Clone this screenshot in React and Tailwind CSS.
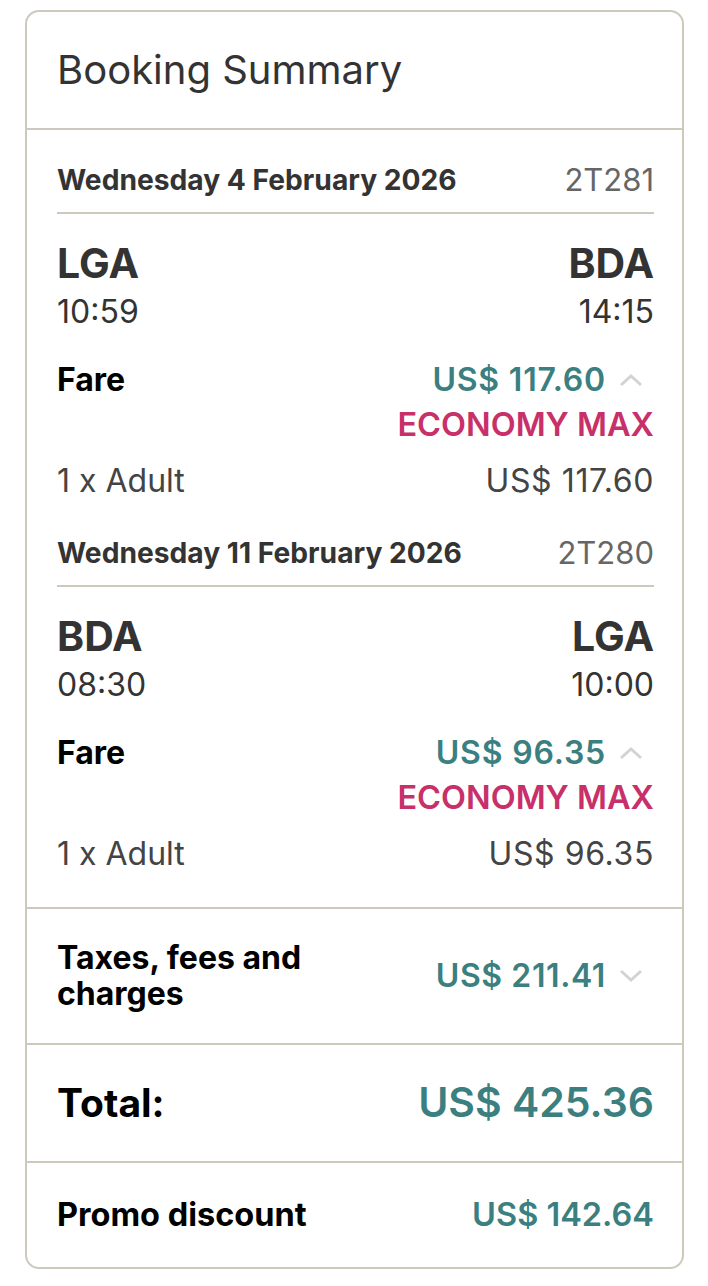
const FONT = { fontFamily: "Inter, 'Liberation Sans', sans-serif" };

const legs = [
  {
    date: "Wednesday 4 February 2026",
    flight: "2T281",
    from: "LGA",
    to: "BDA",
    dep: "10:59",
    arr: "14:15",
    fare: "US$ 117.60",
  },
  {
    date: "Wednesday 11 February 2026",
    flight: "2T280",
    from: "BDA",
    to: "LGA",
    dep: "08:30",
    arr: "10:00",
    fare: "US$ 96.35",
  },
];

function Chevron({ up }) {
  return (
    <svg width="24" height="14" viewBox="0 0 24 14" className="shrink-0">
      <path
        d={up ? "M2 12 L12 3 L22 12" : "M2 2 L12 11 L22 2"}
        fill="none"
        stroke="#d3d3d3"
        strokeWidth="3"
      />
    </svg>
  );
}

function Leg({ leg }) {
  return (
    <div>
      <div className="flex items-center justify-between border-b-2 border-[#cdc9bd] pb-[16px]">
        <span className="text-[28.2px] font-bold text-[#333] leading-[32px]">{leg.date}</span>
        <span className="text-[31px] text-[#666] leading-[32px]">{leg.flight}</span>
      </div>
      <div className="flex justify-between mt-[27px]">
        <div>
          <div className="text-[41px] font-bold text-[#333] leading-[44px]">{leg.from}</div>
          <div className="text-[32px] text-[#333] leading-[38px] mt-[8px]">{leg.dep}</div>
        </div>
        <div className="text-right">
          <div className="text-[41px] font-bold text-[#333] leading-[44px]">{leg.to}</div>
          <div className="text-[32px] text-[#333] leading-[38px] mt-[8px]">{leg.arr}</div>
        </div>
      </div>
      <div className="flex justify-between mt-[29px]">
        <span className="text-[32px] font-bold text-black leading-[40px]">Fare</span>
        <div className="flex flex-col items-end">
          <div className="flex items-center gap-[13px]">
            <span className="text-[32px] font-semibold tracking-[0.8px] text-[#3b7f80] leading-[40px]">
              {leg.fare}
            </span>
            <span className="mr-[11px]">
              <Chevron up />
            </span>
          </div>
          <span className="text-[32.5px] font-semibold text-[#c8306a] leading-[44px] mt-[3px]">ECONOMY MAX</span>
        </div>
      </div>
      <div className="flex justify-between mt-[14px] text-[32px] text-[#444] leading-[40px]">
        <span>1 x Adult</span>
        <span className="tracking-[0.6px]">{leg.fare}</span>
      </div>
    </div>
  );
}

export default function App() {
  return (
    <div className="bg-white min-h-screen pt-[10px] pl-[25px] pr-[24px]" style={FONT}>
      <div className="border-2 border-[#cdc9bd] rounded-[14px]">
        <div className="h-[118px] flex items-center pl-[30px] pr-[28px] border-b-2 border-[#cdc9bd]">
          <h2 className="text-[40px] text-[#333] font-normal">Booking Summary</h2>
        </div>
        <div className="pl-[30px] pr-[28px] pt-[34px] pb-[33px] flex flex-col gap-[36px] border-b-2 border-[#cdc9bd]">
          {legs.map((l) => (
            <Leg key={l.flight} leg={l} />
          ))}
        </div>
        <div className="pl-[30px] pr-[28px] h-[136px] flex items-center justify-between border-b-2 border-[#cdc9bd]">
          <span className="text-[32px] font-bold text-black leading-[36px]">
            Taxes, fees and
            <br />
            charges
          </span>
          <div className="flex items-center gap-[13px] mr-[11px]">
            <span className="text-[32px] font-semibold tracking-[0.6px] text-[#3b7f80]">US$ 211.41</span>
            <Chevron />
          </div>
        </div>
        <div className="pl-[30px] pr-[28px] h-[118px] flex items-center justify-between border-b-2 border-[#cdc9bd]">
          <span className="text-[39px] font-bold text-black">Total:</span>
          <span className="text-[41px] font-semibold text-[#3b7f80]">US$ 425.36</span>
        </div>
        <div className="pl-[30px] pr-[28px] h-[104px] flex items-center justify-between">
          <span className="text-[32.5px] font-bold text-black">Promo discount</span>
          <span className="text-[32.5px] font-semibold text-[#3b7f80]">US$ 142.64</span>
        </div>
      </div>
    </div>
  );
}
